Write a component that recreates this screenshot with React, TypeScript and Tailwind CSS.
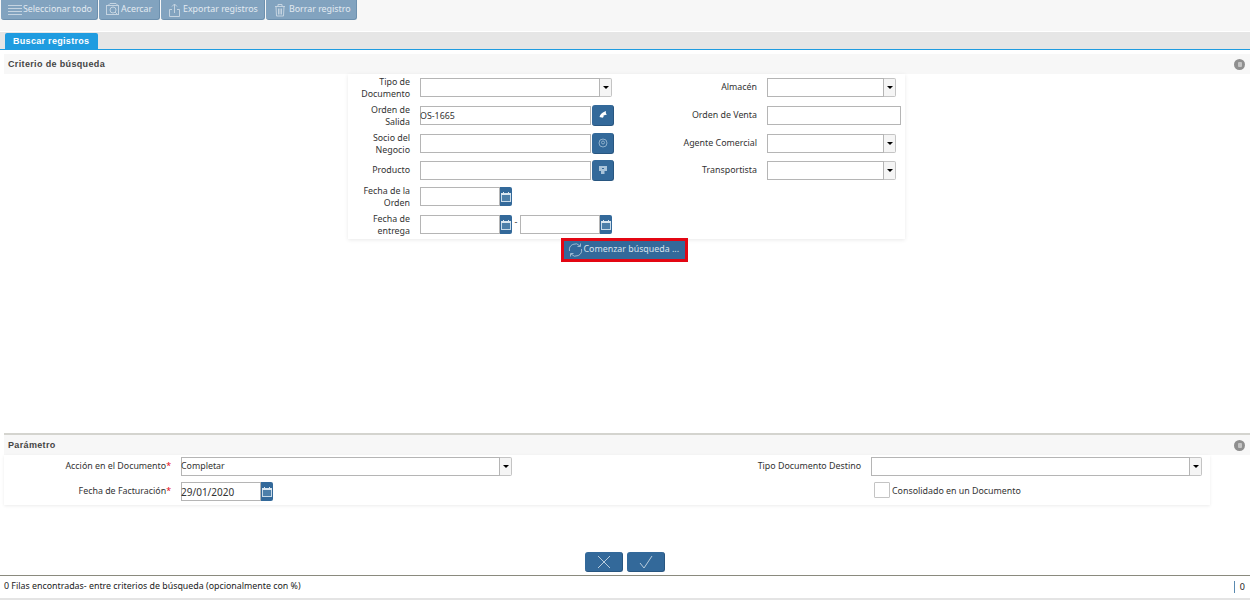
import React from "react";

const Cal = () => (
  <svg width="12" height="12" viewBox="0 0 12 12" fill="none">
    <rect x="1.500" y="2.500" width="9" height="8" fill="#4d7fa9" stroke="#c9dbe9" strokeWidth="1" />
    <rect x="1" y="2" width="10" height="2" fill="#dbe7f0" />
    <rect x="3" y="1" width="1" height="1" fill="#dbe7f0" />
    <rect x="8" y="1" width="1" height="1" fill="#dbe7f0" />
  </svg>
);

const Arrow = () => <div className="w-0 h-0 border-x-[3px] border-x-transparent border-t-[3px] border-t-black" />;

const SelectBox = ({ w, value }: { w: string; value?: string }) => (
  <div className="flex h-[19px]">
    <div className={`${w} h-[19px] border border-[#b5b5b5] bg-white text-[8.85px] indent-[-1px] leading-[17px] text-[#333]`}>{value}</div>
    <div className="w-[12px] h-[19px] border-y border-r border-[#c4c4c4] rounded-r-[2px] bg-[#f5f5f5] flex items-center justify-center">
      <Arrow />
    </div>
  </div>
);

const TextBox = ({ w, value, big }: { w: string; value?: string; big?: boolean }) => (
  <div className={`${w} h-[19px] border border-[#b5b5b5] bg-white ${big ? "text-[10px]" : "text-[8.85px]"} indent-[-1px] leading-[18px] text-[#333]`}>{value}</div>
);

const DateBox = ({ value }: { value?: string }) => (
  <div className="flex h-[19px]">
    <TextBox w="w-[80px]" value={value} big />
    <div className="w-[12px] h-[19px] bg-[#33699a] rounded-r-[2px] flex items-center justify-center">
      <Cal />
    </div>
  </div>
);

const SideBtn = ({ children }: { children: React.ReactNode }) => (
  <div className="w-[22px] h-[21px] -mt-px bg-[#33699a] rounded-[3px] border-b border-r border-[#285680] flex items-center justify-center">
    {children}
  </div>
);

const Label = ({ children }: { children: React.ReactNode }) => (
  <div className="text-right text-[8.85px] leading-[12px] text-[#333] -mt-[2px]">{children}</div>
);

const Single = ({ children }: { children: React.ReactNode }) => (
  <div className="text-right text-[8.85px] leading-[19px] text-[#333]">{children}</div>
);

const ToolBtn = ({ w, icon, text }: { w: string; icon: React.ReactNode; text: string }) => (
  <div className={`${w} h-[20px] bg-[#82a3bf] rounded-b-[3px] border-r border-b border-[#6d90ae] flex items-center pl-[7px] gap-[1px] text-[8.85px] whitespace-nowrap text-[#e2eaf1]`}>
    {icon}
    <span>{text}</span>
  </div>
);

const Collapse = () => (
  <div className="w-[11px] h-[11px] rounded-full bg-[#8f8f8f] flex items-center justify-center">
    <div className="w-[4px] h-[5px] rounded-[1px] bg-[#c4c4c4]" />
  </div>
);

const iconStroke = "#c5d4e1";

export default function App() {
  return (
    <div className="w-[1250px] h-[600px] bg-white overflow-hidden flex flex-col text-[#333] font-['Noto_Sans','Open_Sans',sans-serif]">
      {/* toolbar */}
      <div className="h-[32px] bg-[#f7f7f7] border-b border-[#ffffff] flex gap-[1px] items-start pl-[1px] shrink-0">
        <ToolBtn
          w="w-[97px]"
          text="Seleccionar todo"
          icon={
            <svg width="14" height="12" viewBox="0 0 14 12" stroke={iconStroke} strokeWidth="1">
              <path d="M0 1.500h14M0 4.500h14M0 7.500h14M0 10.500h14" />
            </svg>
          }
        />
        <ToolBtn
          w="w-[61px]"
          text="Acercar"
          icon={
            <svg width="14" height="13" viewBox="0 0 14 13" fill="none" stroke={iconStroke} strokeWidth="1">
              <rect x="0.500" y="2.500" width="12" height="9" />
              <circle cx="7" cy="7" r="3" />
              <path d="M9 9l3 3M2 2.500l2-2h6l2 2" />
            </svg>
          }
        />
        <ToolBtn
          w="w-[104px]"
          text="Exportar registros"
          icon={
            <svg width="14" height="14" viewBox="0 0 14 14" fill="none" stroke={iconStroke} strokeWidth="1">
              <path d="M4 6.500H1.500v7h10v-7H9M6.500 10V1M4 3.500l2.500-2.500L9 3.500" />
            </svg>
          }
        />
        <ToolBtn
          w="w-[91px]"
          text="Borrar registro"
          icon={
            <svg width="14" height="14" viewBox="0 0 14 14" fill="none" stroke={iconStroke} strokeWidth="1" className="mr-[1px]">
              <path d="M2 3.500h10M5 3V1.500h4V3M3 3.500l.5 9.500h7l.5-9.500M5.500 5.500v6M7 5.500v6M8.500 5.500v6" />
            </svg>
          }
        />
      </div>

      {/* tabs */}
      <div className="h-[18px] bg-[#e6e6e6] border-b border-[#1f9ce0] pl-[5px] pt-[1px] shrink-0">
        <div className="w-[93px] h-[16px] bg-[#1f9ce0] rounded-t-[2px] text-white text-[9px] font-bold font-['Liberation_Sans',sans-serif] tracking-[0.3px] pl-[8px] leading-[16px]">
          Buscar registros
        </div>
      </div>

      {/* search section */}
      <div className="h-[383px] pl-[4px] pt-[4px] shrink-0">
        <div className="h-[20px] bg-[#f7f7f7] flex items-center justify-between pl-[4px] pr-[5px] text-[9px] font-bold font-['Liberation_Sans',sans-serif] tracking-[0.35px] text-[#444]">
          <span className="pt-[1px]">Criterio de búsqueda</span>
          <Collapse />
        </div>
        <div className="ml-[344px] w-[557px] h-[165px] pt-[4px] bg-white shadow-[0_1px_4px_rgba(0,0,0,0.09)] grid grid-cols-[62px_250px_97px_148px] grid-rows-[28px_28px_27px_26px_28px_28px]">
          <Label>Tipo de Documento</Label>
          <div className="pl-[10px]"><SelectBox w="w-[180px]" /></div>
          <Single>Almacén</Single>
          <div className="pl-[10px]"><SelectBox w="w-[117px]" /></div>

          <Label>Orden de Salida</Label>
          <div className="pl-[10px] flex gap-[1px]">
            <TextBox w="w-[171px]" value="OS-1665" />
            <SideBtn>
              <svg width="10" height="10" viewBox="0 0 10 10" fill="#fff">
                <path d="M8 1C5 2 2 4 1.500 7l2 .5C5 8 6 7 5.500 5.500L9 4.500C8 4 7.500 3 8 1z" />
              </svg>
            </SideBtn>
          </div>
          <Single>Orden de Venta</Single>
          <div className="pl-[10px]"><TextBox w="w-[134px]" /></div>

          <Label>Socio del Negocio</Label>
          <div className="pl-[10px] flex gap-[1px]">
            <TextBox w="w-[171px]" />
            <SideBtn>
              <svg width="10" height="10" viewBox="0 0 10 10" fill="none" stroke="#8fb0cc">
                <circle cx="5" cy="5" r="4" />
                <circle cx="5" cy="4.500" r="1.500" />
              </svg>
            </SideBtn>
          </div>
          <Single>Agente Comercial</Single>
          <div className="pl-[10px]"><SelectBox w="w-[117px]" /></div>

          <Single>Producto</Single>
          <div className="pl-[10px] flex gap-[1px]">
            <TextBox w="w-[171px]" />
            <SideBtn>
              <svg width="10" height="10" viewBox="0 0 10 10" fill="#a9c3d9">
                <path d="M1 1h8v5H6.500v3H3V6H1z" />
                <path d="M4 3h2v1H4z" fill="#33699a" />
              </svg>
            </SideBtn>
          </div>
          <Single>Transportista</Single>
          <div className="pl-[10px]"><SelectBox w="w-[117px]" /></div>

          <Label>Fecha de la Orden</Label>
          <div className="pl-[10px]"><DateBox /></div>
          <div />
          <div />

          <Label>Fecha de entrega</Label>
          <div className="pl-[10px] flex">
            <DateBox />
            <span className="w-[8px] text-[9px] leading-[14px] text-center">-</span>
            <DateBox />
          </div>
          <div />
          <div />
        </div>
        <div className="mt-[-1px] flex justify-center pr-[6px]">
          <div className="w-[127px] h-[24px] border-[3px] border-[#e30613] bg-[#33699a] flex items-center pl-[4px] gap-[1px] text-[8.85px] whitespace-nowrap text-[#d8e3ec]">
            <svg width="15" height="14" viewBox="0 0 15 14" fill="none" stroke="#9db9d0" strokeWidth="1">
              <path d="M1.500 8A6 6 0 0 1 12 3M13.500 6A6 6 0 0 1 3 11M12.500 0.500V3.500H9.500M2.500 13.500V10.500H5.500" />
            </svg>
            <span>Comenzar búsqueda ...</span>
          </div>
        </div>
      </div>

      {/* parameter section */}
      <div className="pl-[4px] shrink-0">
        <div className="h-[22px] bg-[#f7f7f7] border-t-2 border-[#d4d4cf] flex items-center justify-between pl-[4px] pr-[5px] text-[9px] font-bold font-['Liberation_Sans',sans-serif] tracking-[0.35px] text-[#444]">
          <span className="pt-[1px]">Parámetro</span>
          <Collapse />
        </div>
        <div className="w-[1206px] h-[50px] pt-[2px] bg-white shadow-[0_1px_3px_rgba(0,0,0,0.08)] grid grid-cols-[167px_580px_110px_349px] grid-rows-[25px_25px]">
          <Single>
            Acción en el Documento<span className="text-[#e30613]">*</span>
          </Single>
          <div className="pl-[10px]"><SelectBox w="w-[319px]" value="Completar" /></div>
          <Single>Tipo Documento Destino</Single>
          <div className="pl-[10px]"><SelectBox w="w-[319px]" /></div>
          <Single>
            Fecha de Facturación<span className="text-[#e30613]">*</span>
          </Single>
          <div className="pl-[10px]"><DateBox value="29/01/2020" /></div>
          <div />
          <div className="pl-[13px] flex items-start gap-[2px]">
            <div className="w-[16px] h-[16px] border border-[#c4c4c4] bg-white rounded-[1px]" />
            <span className="text-[8.85px] leading-[18px]">Consolidado en un Documento</span>
          </div>
        </div>
      </div>

      {/* dialog buttons */}
      <div className="flex justify-center gap-[4px] pt-[47px] shrink-0">
        <div className="w-[38px] h-[20px] bg-[#33699a] rounded-[3px] border-b border-r border-[#285680] flex items-center justify-center">
          <svg width="14" height="14" viewBox="0 0 14 14" stroke="#b9cddd" strokeWidth="1">
            <path d="M1 1l12 12M13 1L1 13" />
          </svg>
        </div>
        <div className="w-[38px] h-[20px] bg-[#33699a] rounded-[3px] border-b border-r border-[#285680] flex items-center justify-center">
          <svg width="14" height="14" viewBox="0 0 14 14" fill="none" stroke="#b9cddd" strokeWidth="1">
            <path d="M1 8l4 5 8-12" />
          </svg>
        </div>
      </div>

      {/* status */}
      <div className="mt-[3px] h-[25px] border-t border-b-2 border-t-[#8a8a7e] border-b-[#e4e4e4] flex items-center justify-between pl-[4px] pr-[5px] text-[#222] shrink-0">
        <span className="text-[8.85px]">0 Filas encontradas- entre criterios de búsqueda (opcionalmente con %)</span>
        <div className="flex items-center">
          <div className="w-[1px] h-[12px] bg-[#5a8ab0] mr-[5px]" />
          <span className="text-[9px]">0</span>
        </div>
      </div>
    </div>
  );
}
